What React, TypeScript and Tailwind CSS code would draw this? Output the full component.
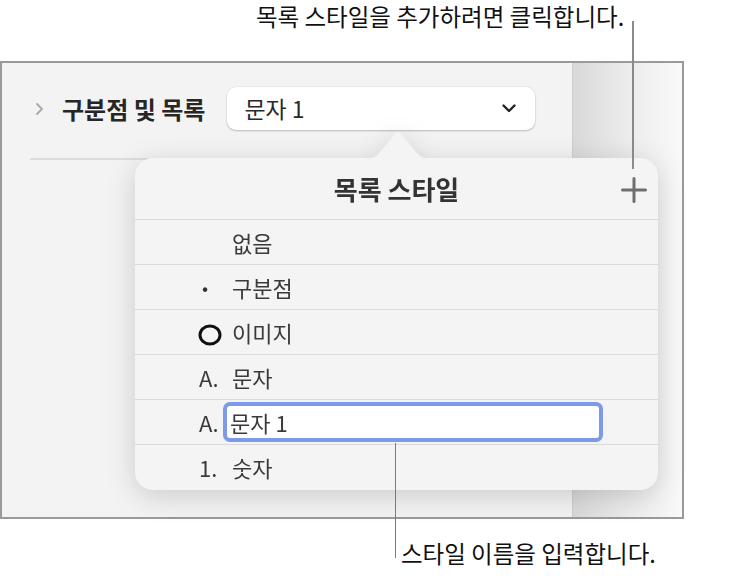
import React from "react";

const FONT = '"Noto Sans CJK KR", "Noto Sans", sans-serif';

function Row({
  marker,
  children,
}: {
  marker?: React.ReactNode;
  children: React.ReactNode;
}) {
  return (
    <div className="relative flex h-[45px] items-center border-t border-[#dadada]">
      <div className="flex w-[97px] shrink-0 items-center pl-[64px]">{marker}</div>
      <div className="text-[22px] leading-none text-[#3a3a3a]">{children}</div>
    </div>
  );
}

export default function App() {
  return (
    <div
      className="relative h-[580px] w-[747px] overflow-hidden bg-white"
      style={{ fontFamily: FONT }}
    >
      {/* top annotation */}
      <div className="h-[61px] pl-[256px] pt-[1px] text-[23.5px] leading-[30px] text-[#111]">
        목록 스타일을 추가하려면 클릭합니다.
      </div>

      {/* panel */}
      <div className="flex h-[458px] w-[684px] border-2 border-[#9a9a9a]">
        <div className="w-[570px] shrink-0 bg-[#f3f3f3]">
          <div className="flex items-center pt-[24px]">
            <svg width="9" height="12" viewBox="0 0 9 12" className="ml-[33px]">
              <polyline
                points="2,1 7,6 2,11"
                fill="none"
                stroke="#a9a9a9"
                strokeWidth="1.8"
                strokeLinecap="round"
                strokeLinejoin="round"
              />
            </svg>
            <div className="ml-[18px] text-[24px] font-bold leading-none text-[#262626]">
              구분점 및 목록
            </div>
            <div className="ml-[22px] flex h-[43px] w-[308px] items-center justify-between rounded-[9px] bg-white pl-[17px] pr-[19px] shadow-[0_1px_2px_rgba(0,0,0,0.22),0_0_0_0.5px_rgba(0,0,0,0.06)]">
              <span className="text-[23px] leading-none text-[#2a2a2a]">문자 1</span>
              <svg width="14" height="9" viewBox="0 0 14 9">
                <polyline
                  points="1.5,1.5 7,7 12.5,1.5"
                  fill="none"
                  stroke="#222"
                  strokeWidth="2.4"
                  strokeLinecap="round"
                  strokeLinejoin="round"
                />
              </svg>
            </div>
          </div>
          <div className="ml-[28px] mt-[28px] h-[2px] bg-[#dcdcdc]" />
        </div>
        <div className="flex-1 border-l border-[#cfcfcf] bg-gradient-to-r from-[#d9d9d9] via-[#ececec] to-[#f9f9f9]" />
      </div>

      {/* popover */}
      <div className="absolute left-[135px] top-[132px] drop-shadow-[0_6px_14px_rgba(0,0,0,0.16)]">
        <svg
          width="72"
          height="27"
          viewBox="0 0 72 27"
          className="absolute left-[227px] top-0"
        >
          <path
            d="M0 27 C10 27 14 25 18 20 L33 2 Q36 -1 39 2 L54 20 C58 25 62 27 72 27 Z"
            fill="#f4f4f4"
          />
        </svg>
        <div className="mt-[26px] h-[332px] w-[523px] overflow-hidden rounded-[18px] bg-[#f4f4f4]">
          <div className="relative flex h-[61px] items-center justify-center">
            <span className="text-[26px] font-bold leading-none text-[#333]">
              목록 스타일
            </span>
            <svg
              width="26"
              height="26"
              viewBox="0 0 26 26"
              className="absolute right-[11px] top-[19px]"
            >
              <path
                d="M13 1.5 V24.5 M1.5 13 H24.5"
                stroke="#6e6e6e"
                strokeWidth="3"
                strokeLinecap="round"
              />
            </svg>
          </div>
          <Row>없음</Row>
          <Row
            marker={
              <span className="ml-[3px] text-[18px] leading-none text-[#333]">•</span>
            }
          >
            구분점
          </Row>
          <Row
            marker={
              <svg width="24" height="22" viewBox="0 0 24 22" className="ml-[-1px] mt-[6px]">
                <ellipse
                  cx="12"
                  cy="11"
                  rx="10"
                  ry="9"
                  fill="none"
                  stroke="#111"
                  strokeWidth="3"
                />
              </svg>
            }
          >
            이미지
          </Row>
          <Row
            marker={
              <span className="text-[22px] leading-none text-[#3a3a3a]">A.</span>
            }
          >
            문자
          </Row>
          <div className="relative flex h-[45px] items-center border-t border-[#dadada]">
            <div className="flex w-[88px] shrink-0 items-center pl-[64px] text-[22px] leading-none text-[#3a3a3a]">
              A.
            </div>
            <div className="flex h-[40px] w-[380px] items-center rounded-[7px] border-4 border-[#7c9ae8] bg-white pl-[3px] text-[22px] leading-none text-[#3a3a3a]">
              문자 1
            </div>
          </div>
          <Row
            marker={
              <span className="text-[22px] leading-none text-[#3a3a3a]">1.</span>
            }
          >
            숫자
          </Row>
        </div>
      </div>

      {/* leader lines */}
      <div className="absolute left-[632px] top-[21px] h-[148px] w-[2px] bg-[#8a8a8a]" />
      <div className="absolute left-[395px] top-[443px] h-[115px] w-[1px] bg-[#7a7a7a]" />

      {/* bottom annotation */}
      <div className="absolute left-[401px] top-[538px] text-[23.5px] leading-[30px] text-[#111]">
        스타일 이름을 입력합니다.
      </div>
    </div>
  );
}
